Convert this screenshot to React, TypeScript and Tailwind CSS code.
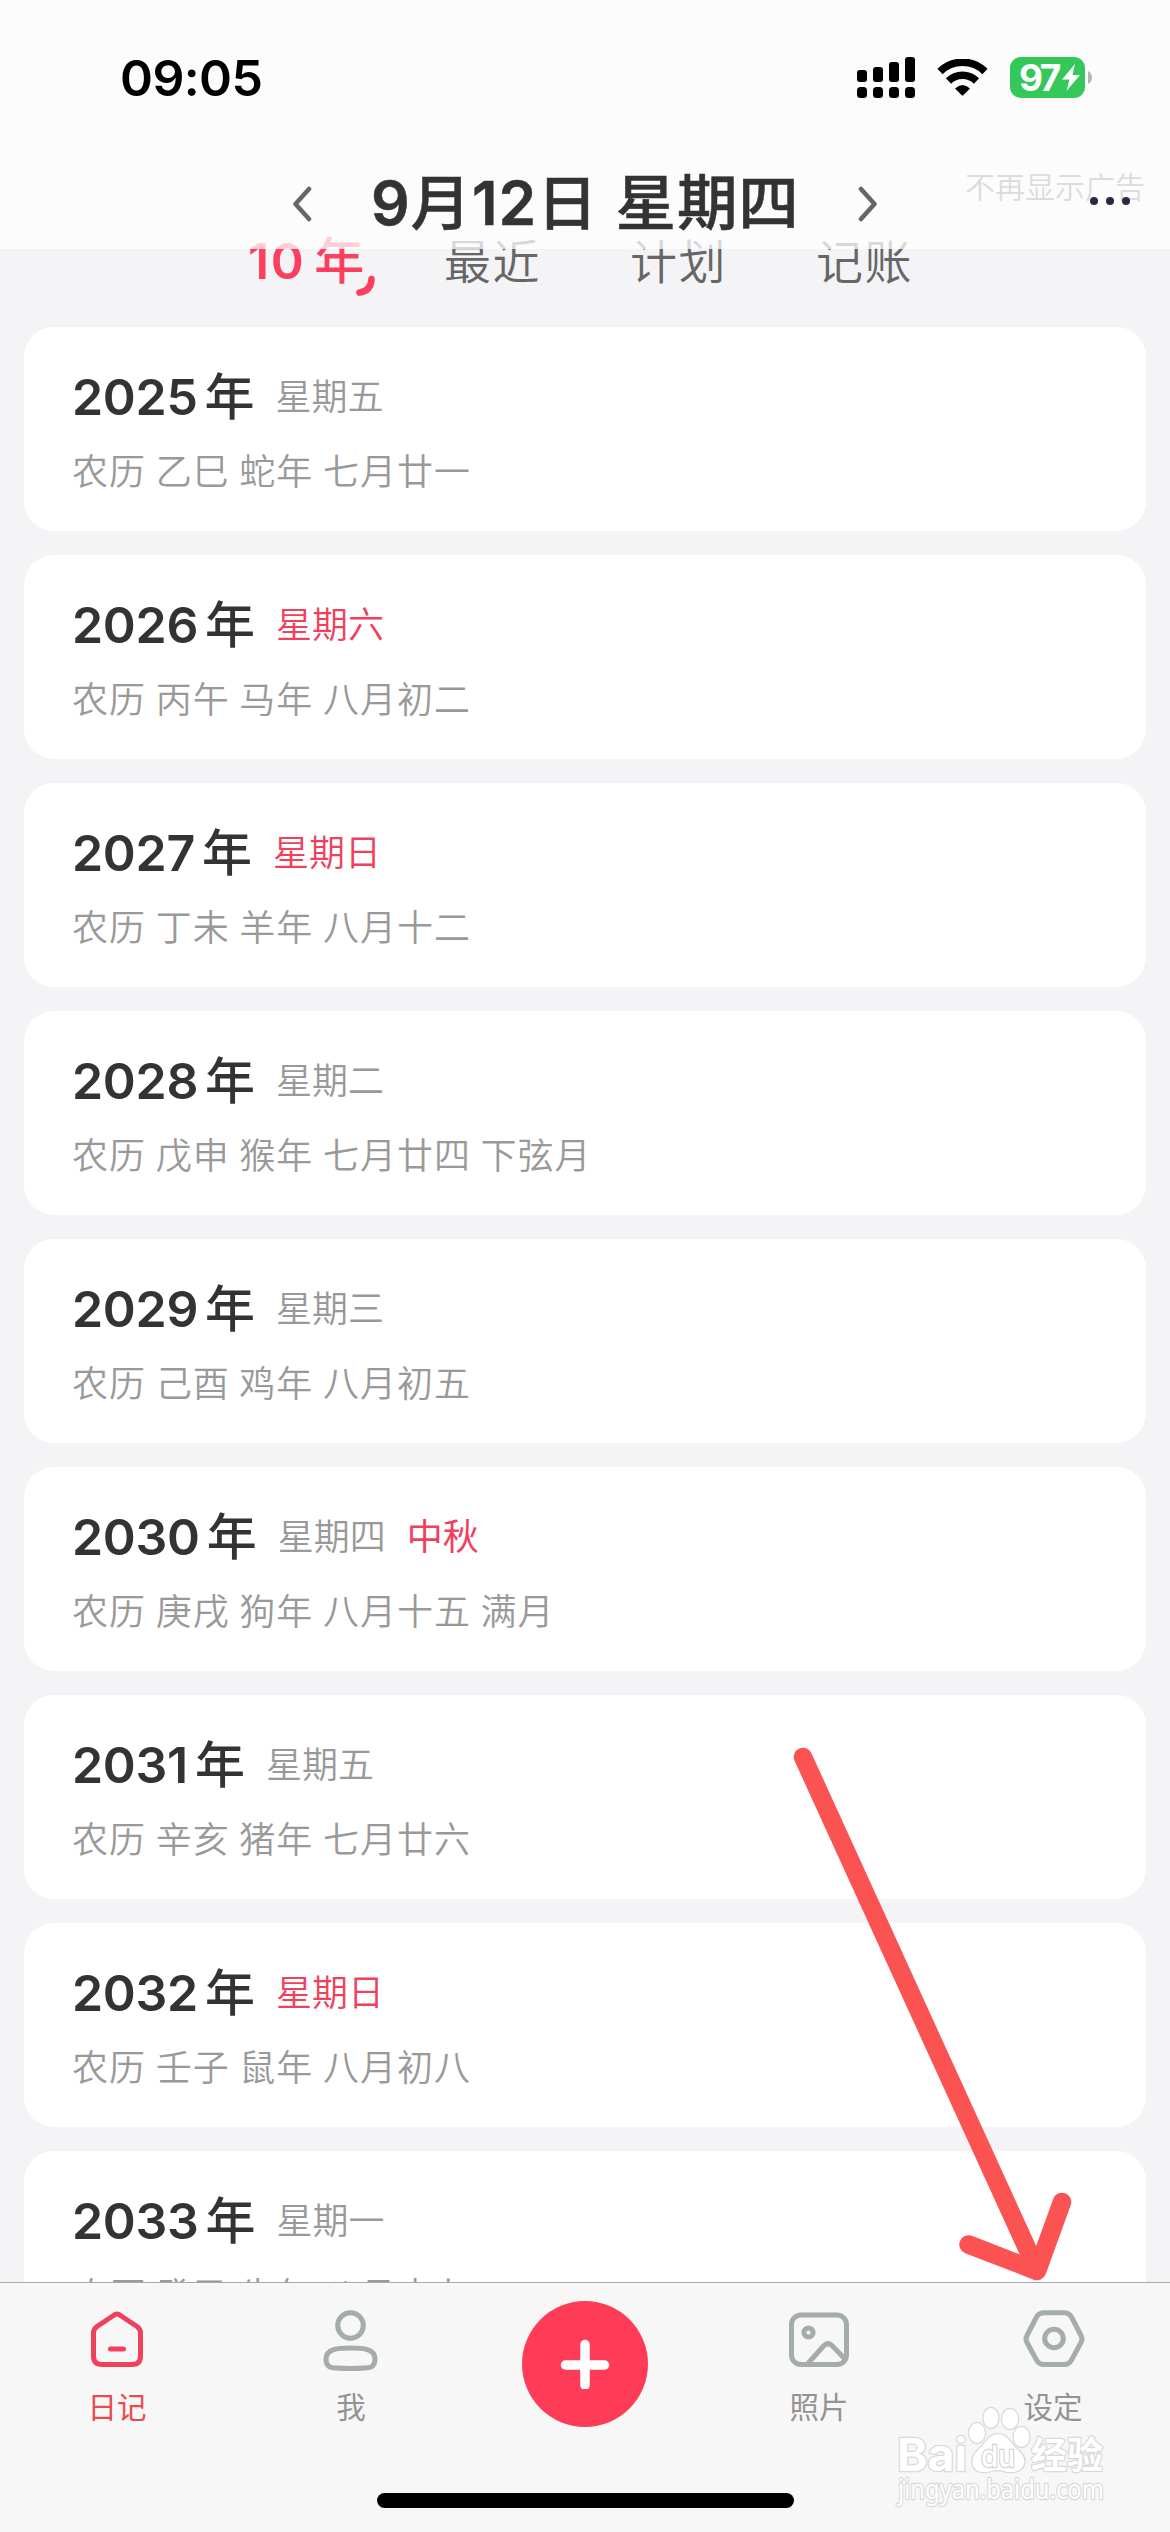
import React from "react"
import clsx from "clsx"

interface YearEntry {
  year: string
  weekday: string
  weekend?: boolean
  festival?: string
  lunar: string
}

const years: YearEntry[] = [
  { year: "2025", weekday: "星期五", lunar: "农历 乙巳 蛇年 七月廿一" },
  { year: "2026", weekday: "星期六", weekend: true, lunar: "农历 丙午 马年 八月初二" },
  { year: "2027", weekday: "星期日", weekend: true, lunar: "农历 丁未 羊年 八月十二" },
  { year: "2028", weekday: "星期二", lunar: "农历 戊申 猴年 七月廿四 下弦月" },
  { year: "2029", weekday: "星期三", lunar: "农历 己酉 鸡年 八月初五" },
  { year: "2030", weekday: "星期四", festival: "中秋", lunar: "农历 庚戌 狗年 八月十五 满月" },
  { year: "2031", weekday: "星期五", lunar: "农历 辛亥 猪年 七月廿六" },
  { year: "2032", weekday: "星期日", weekend: true, lunar: "农历 壬子 鼠年 八月初八" },
  { year: "2033", weekday: "星期一", lunar: "农历 癸丑 牛年 八月十九" },
]

const StatusBar = () => (
  <div className="flex h-[155px] items-center justify-between pl-[120px] pr-[78px]">
    <span className="text-[50px] leading-none font-semibold tracking-[-0.6px] text-black">09:05</span>
    <div className="flex items-center">
      <svg className="h-[41px] w-[58px]" viewBox="0 0 58 41" fill="#000">
        <rect x="0" y="13" width="10" height="12" rx="3" />
        <rect x="16" y="10" width="10" height="15" rx="3" />
        <rect x="32" y="5" width="10" height="20" rx="3" />
        <rect x="48" y="0" width="10" height="25" rx="3" />
        <rect x="0" y="30" width="10" height="11" rx="3.5" />
        <rect x="16" y="30" width="10" height="11" rx="3.5" />
        <rect x="32" y="30" width="10" height="11" rx="3.5" />
        <rect x="48" y="30" width="10" height="11" rx="3.5" />
      </svg>
      <svg className="ml-[22px] h-[37px] w-[51px]" viewBox="0 0 51 37">
        <path d="M3 12.500 A32 32 0 0 1 48 12.500" fill="none" stroke="#000" strokeWidth="7.500" />
        <path d="M11.500 22 A20 20 0 0 1 39.500 22" fill="none" stroke="#000" strokeWidth="7.500" />
        <path d="M18 29.500 Q25.500 22.500 33 29.500 L26.500 36 Q25.500 37 24.500 36 Z" fill="#000" />
      </svg>
      <div className="ml-[22px] flex h-[41px] w-[75px] items-center rounded-[11px] bg-[#34c759] pl-[9px] text-white">
        <span className="text-[37px] leading-none font-bold tracking-[-2.5px]">97</span>
        <svg className="ml-[2px] h-[29px] w-[20px]" viewBox="0 0 20 29" fill="#fff">
          <path d="M14 1 L1 16.500 H8.500 L5.500 28 L19 12 H11.500 Z" />
        </svg>
      </div>
      <svg className="ml-[3px] h-[13px] w-[4px]" viewBox="0 0 4 13" fill="#b5b5b5">
        <path d="M0 0 Q4 2 4 6.500 Q4 11 0 13 Z" />
      </svg>
    </div>
  </div>
)

const Header = () => (
  <header className="relative z-10 h-[249px] shrink-0 bg-white/75">
    <StatusBar />
    <div className="flex h-[94px] items-center justify-center">
      <svg className="mt-[4px] h-[36px] w-[20px]" viewBox="0 0 20 36" fill="none" stroke="#666" strokeWidth="4.500" strokeLinecap="round" strokeLinejoin="round">
        <path d="M17 3 L3.500 18 L17 33" />
      </svg>
      <h1 className="mx-[59px] mt-[3px] w-[428px] text-center text-[60.5px] leading-none font-medium tracking-[0.9px] whitespace-nowrap text-[#333] [-webkit-text-stroke:0.5px_#333]">
        <span className="font-semibold">9</span>月<span className="font-semibold">12</span>日 星期四
      </h1>
      <svg className="mt-[4px] h-[36px] w-[20px]" viewBox="0 0 20 36" fill="none" stroke="#666" strokeWidth="4.500" strokeLinecap="round" strokeLinejoin="round">
        <path d="M3 3 L16.500 18 L3 33" />
      </svg>
    </div>
    {/* 广告提示与更多菜单 */}
    <span className="absolute top-[172px] right-[25px] text-[30px] leading-[30px] font-[350] text-[#dcdcdc]">不再显示广告</span>
    <div className="absolute top-[197px] right-[40px] flex gap-[8px]">
      <i className="size-[8px] rounded-full bg-[#2b2840]" />
      <i className="size-[8px] rounded-full bg-[#2b2840]" />
      <i className="size-[8px] rounded-full bg-[#2b2840]" />
    </div>
  </header>
)

const CategoryTabs = () => (
  <nav className="flex h-[96px] shrink-0 items-center text-[47px] leading-none font-[350] tracking-[1.500px] text-[#666]">
    <div className="relative ml-[248px] w-[196px] font-medium text-[#fb3f5d]">
      <span className="text-[50px] font-semibold">10</span>
      <span className="ml-[9px] text-[50px] tracking-normal">年</span>
      <svg className="absolute top-[39px] left-[106px] h-[22px] w-[24px]" viewBox="0 0 24 22" fill="none" stroke="#fb3f5d" strokeWidth="6.500" strokeLinecap="round">
        <path d="M17.500 4 Q17 16 5.500 17.500" />
      </svg>
    </div>
    <span className="w-[186px]">最近</span>
    <span className="w-[186px]">计划</span>
    <span>记账</span>
  </nav>
)

const YearCard: React.FC<{ entry: YearEntry }> = ({ entry }) => (
  <div className="h-[204px] shrink-0 rounded-[30px] bg-white px-[48px] pt-[44px]">
    <div className="flex h-[52px] items-center leading-none">
      <span className="text-[50px] font-semibold tracking-[-0.3px] text-[#333] [font-kerning:none]">{entry.year}</span>
      <span className="ml-[7px] text-[50px] font-medium text-[#333]">年</span>
      <span className={clsx("ml-[21px] text-[36px] font-[350]", entry.weekend ? "text-[#f0405c]" : "text-[#999]")}>
        {entry.weekday}
      </span>
      {entry.festival && <span className="ml-[21px] text-[36px] text-[#f0405c]">{entry.festival}</span>}
    </div>
    <p className="mt-[30px] text-[36px] leading-[38px] font-[350] tracking-[1px] [word-spacing:-1.5px] whitespace-nowrap text-[#999]">
      {entry.lunar}
    </p>
  </div>
)

const NavItem: React.FC<{ label: string; active?: boolean; children: React.ReactNode }> = ({ label, active, children }) => (
  <button className="flex flex-col items-center pt-[25px]">
    <svg
      className="h-[66px] w-[66px]"
      viewBox="0 0 66 66"
      fill="none"
      stroke={active ? "#f0405c" : "#a4ada7"}
      strokeWidth="5"
      strokeLinecap="round"
      strokeLinejoin="round"
    >
      {children}
    </svg>
    <span className={clsx("mt-[18px] text-[29.5px] leading-[30px]", active ? "text-[#ea4a4a]" : "text-[#939393]")}>{label}</span>
  </button>
)

const Watermark = () => (
  <svg className="absolute top-[2400px] left-[890px] h-[115px] w-[225px]" viewBox="0 0 225 115">
    <g fill="#fff" stroke="#d9d9d9" strokeWidth="2.500" paintOrder="stroke" strokeLinejoin="round">
      <ellipse cx="87" cy="33" rx="8" ry="10" />
      <ellipse cx="101" cy="18" rx="7.500" ry="10" />
      <ellipse cx="120" cy="19" rx="8" ry="10" />
      <ellipse cx="131.500" cy="37" rx="8" ry="10" />
      <path d="M108 34 C118 34 120 44 128 50 C139 59 135 72 121 72 C113 72 113 70 108 70 C103 70 101 72 94 72 C81 72 79 59 88 50 C96 44 98 34 108 34 Z" />
      <text x="7" y="71" textLength="70" lengthAdjust="spacingAndGlyphs" fontSize="45" fontWeight="700" fontFamily="Inter, sans-serif">Bai</text>
      <text x="141" y="69" textLength="72" lengthAdjust="spacingAndGlyphs" fontSize="37" fontWeight="700" fontFamily="'Noto Sans CJK SC', sans-serif">经验</text>
      <text x="8" y="99" textLength="206" lengthAdjust="spacingAndGlyphs" fontSize="27" fontFamily="'Noto Sans', sans-serif">jingyan.baidu.com</text>
    </g>
    <text x="91" y="67" textLength="34" lengthAdjust="spacingAndGlyphs" fontSize="30" fontWeight="500" fill="#fff" stroke="#d4d4d4" strokeWidth="2.500" paintOrder="stroke" fontFamily="Inter, sans-serif">du</text>
  </svg>
)

export default function App() {
  return (
    <div className="relative flex h-[2532px] w-[1170px] flex-col overflow-hidden bg-[#f4f4f7] font-['Inter','Noto_Sans_CJK_SC',sans-serif]">
      <Header />

      {/* 列表从半透明标题栏下方滚过 */}
      <main className="-mt-[36px] flex h-[2069px] shrink-0 flex-col overflow-hidden">
        <CategoryTabs />
        <div className="mt-[18px] flex flex-col gap-[24px] px-[24px]">
          {years.map((entry) => (
            <YearCard key={entry.year} entry={entry} />
          ))}
        </div>
      </main>

      <footer className="flex h-[250px] shrink-0 flex-col items-center border-t border-[#a9a9ab] bg-[#f7f7f7]">
        <div className="grid h-[210px] w-full grid-cols-5">
          <NavItem label="日记" active>
            <path d="M29.500 7.500 Q33 4.500 36.500 7.500 L53 18.500 Q56.500 21 56.500 25 V48 Q56.500 56.500 48 56.500 H18 Q9.500 56.500 9.500 48 V25 Q9.500 21 13 18.500 Z" />
            <path d="M26.500 41 H39.500" />
          </NavItem>
          <NavItem label="我">
            <circle cx="32.500" cy="17.500" r="12.800" />
            <path d="M32.500 40 C45 40 57 40.500 57 51 C57 58 53 60 47 60 Q32.500 61 18 60 C12 60 8 58 8 51 C8 40.500 20 40 32.500 40 Z" />
          </NavItem>
          <div className="flex justify-center pt-[18px]">
            <button className="flex size-[126px] items-center justify-center rounded-full bg-[#fe3c57]">
              <svg className="h-[50px] w-[50px]" viewBox="0 0 50 50" stroke="#fff" strokeWidth="9.500" strokeLinecap="round">
                <path d="M25 5.500 V46.500 M5.500 26 H44.500" />
              </svg>
            </button>
          </div>
          <NavItem label="照片">
            <rect x="5.500" y="7" width="55" height="49.500" rx="9.500" />
            <circle cx="22.500" cy="24.500" r="4.600" />
            <path d="M21.500 56 L37.500 38 Q42 33.500 46.500 38 L59 51" />
          </NavItem>
          <NavItem label="设定">
            <path d="M24 4.700 H44 Q49 4.700 51.500 9 L61 27.500 Q63 31 61 34.500 L51.500 52 Q49 56.500 44 56.500 H24 Q19 56.500 16.500 52 L7 34.500 Q5 31 7 27.500 L16.500 9 Q19 4.700 24 4.700 Z" />
            <circle cx="34" cy="30.500" r="9.300" />
          </NavItem>
        </div>
        <div className="h-[15px] w-[417px] rounded-full bg-black" />
      </footer>

      {/* 指向设定的箭头 */}
      <svg className="absolute top-[1740px] left-[780px] z-20 h-[550px] w-[310px]" viewBox="780 1740 310 550" fill="none" stroke="#fb5352" strokeWidth="18.500" strokeLinecap="round" strokeLinejoin="round">
        <path d="M803 1757 L1037 2270 M968.500 2244.500 L1037 2271 L1062 2202" />
      </svg>
      <Watermark />
    </div>
  )
}
